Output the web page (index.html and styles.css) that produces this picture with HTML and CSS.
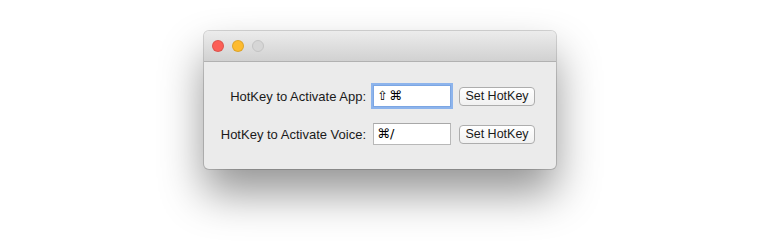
FILE: index.html
```html
<!DOCTYPE html>
<html lang="en">
<head>
    <meta charset="UTF-8">
    <title>HotKey Preferences</title>
    <link rel="stylesheet" href="styles.css">
</head>
<body>
    <div class="window">
        <div class="titlebar">
            <span class="light red"></span>
            <span class="light yellow"></span>
            <span class="light gray"></span>
        </div>
        <div class="content">
            <label class="label">HotKey to Activate App:</label>
            <div class="field focused"><span class="key">&#x21E7;</span>&#x2318;</div>
            <button class="btn">Set HotKey</button>

            <label class="label">HotKey to Activate Voice:</label>
            <div class="field">&#x2318;/</div>
            <button class="btn">Set HotKey</button>
        </div>
    </div>
</body>
</html>
```

FILE: styles.css
```css
html, body {
    height: 250px;
}
body {
    margin: 0;
    background-color: #ffffff;
    font-family: "Liberation Sans", Arial, sans-serif;
    font-size: 13px;
    color: #1a1a1a;
    display: flex;
    justify-content: center;
    align-items: flex-start;
    padding-top: 31px;
    box-sizing: border-box;
}
.window {
    width: 352px;
    background-color: #ebebeb;
    border-radius: 5px;
    box-shadow: 0 0 0 1px rgba(0,0,0,0.16), 0 24px 44px rgba(0,0,0,0.42);
    overflow: hidden;
}
.titlebar {
    height: 30px;
    background: linear-gradient(#ececec, #d1d1d1);
    border-bottom: 1px solid #b1b1b1;
    display: flex;
    align-items: center;
    padding-left: 8px;
    gap: 8px;
}
.light {
    width: 12px;
    height: 12px;
    border-radius: 50%;
    box-sizing: border-box;
    border: 1px solid rgba(0,0,0,0.12);
}
.red {
    background-color: #fc5f57;
}
.yellow {
    background-color: #fdbb2f;
}
.gray {
    background-color: #d6d6d6;
    border-color: #c4c4c4;
}
.content {
    display: grid;
    grid-template-columns: 146px 78px 77px;
    column-gap: 7px;
    row-gap: 16px;
    align-items: center;
    padding: 23px 20px 24px 16px;
}
.content .btn {
    margin-left: 1px;
}
.label {
    justify-self: end;
    white-space: nowrap;
}
.field {
    height: 20px;
    line-height: 20px;
    background-color: #ffffff;
    border: 1px solid #b8b8b8;
    border-top-color: #a8a8a8;
    padding-left: 3px;
    font-family: "DejaVu Sans", sans-serif;
    font-size: 13px;
    color: #000;
}
.key {
    margin-right: 1px;
}
.field.focused {
    border-color: #7ca6e3;
    box-shadow: 0 0 0 2px #8db4ec;
}
.btn {
    height: 19px;
    padding: 0;
    font-family: "Liberation Sans", Arial, sans-serif;
    font-size: 12.5px;
    color: #1a1a1a;
    background: linear-gradient(#ffffff, #f1f1f1);
    border: 1px solid #adadad;
    border-radius: 4px;
}
```
